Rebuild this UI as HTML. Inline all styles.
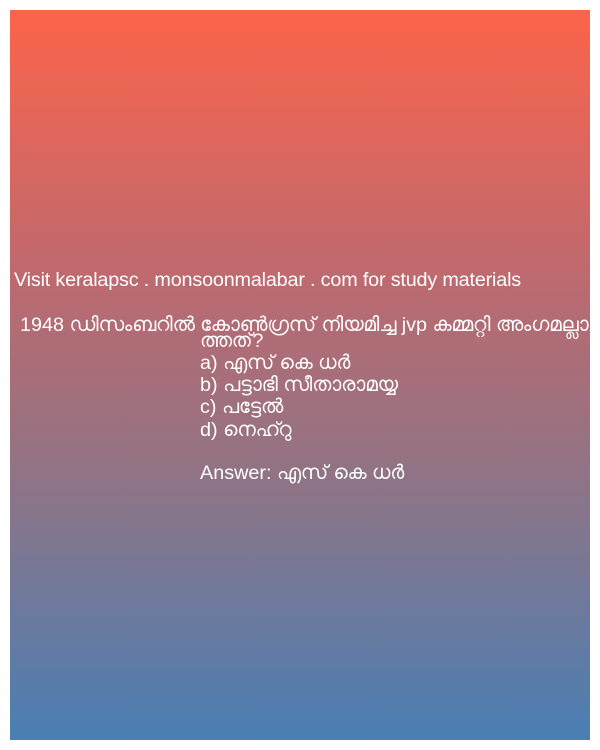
<!DOCTYPE html>
<html><head><meta charset="utf-8"><style>
html,body{margin:0;padding:0;background:#fff;width:600px;height:750px;overflow:hidden}
.g{position:absolute;left:10px;top:10px;width:580px;height:730px;background:linear-gradient(#fc644a,#c0696e 35%,#8e7486 65%,#4a7fb4)}
.t{position:absolute;color:#fff;font-family:"Liberation Sans","DejaVu Sans",sans-serif;font-size:19.8px;white-space:nowrap;line-height:22px}
</style></head><body>
<div class="g"></div>
<div class="t" style="left:14px;top:269px;letter-spacing:-0.18px">Visit keralapsc . monsoonmalabar . com for study materials</div>
<div class="t" style="left:20px;top:314px">1948 ഡിസംബറിൽ കോൺഗ്രസ് നിയമിച്ച jvp കമ്മറ്റി അംഗമല്ലാ</div>
<div class="t" style="left:200px;top:330px">ത്തത്?</div>
<div class="t" style="left:200px;top:352px">a) എസ് കെ ധർ</div>
<div class="t" style="left:200px;top:374px">b) പട്ടാഭി സീതാരാമയ്യ</div>
<div class="t" style="left:200px;top:396px">c) പട്ടേൽ</div>
<div class="t" style="left:200px;top:419px">d) നെഹ്റു</div>
<div class="t" style="left:200px;top:462px">Answer: എസ് കെ ധർ</div>
</body></html>
